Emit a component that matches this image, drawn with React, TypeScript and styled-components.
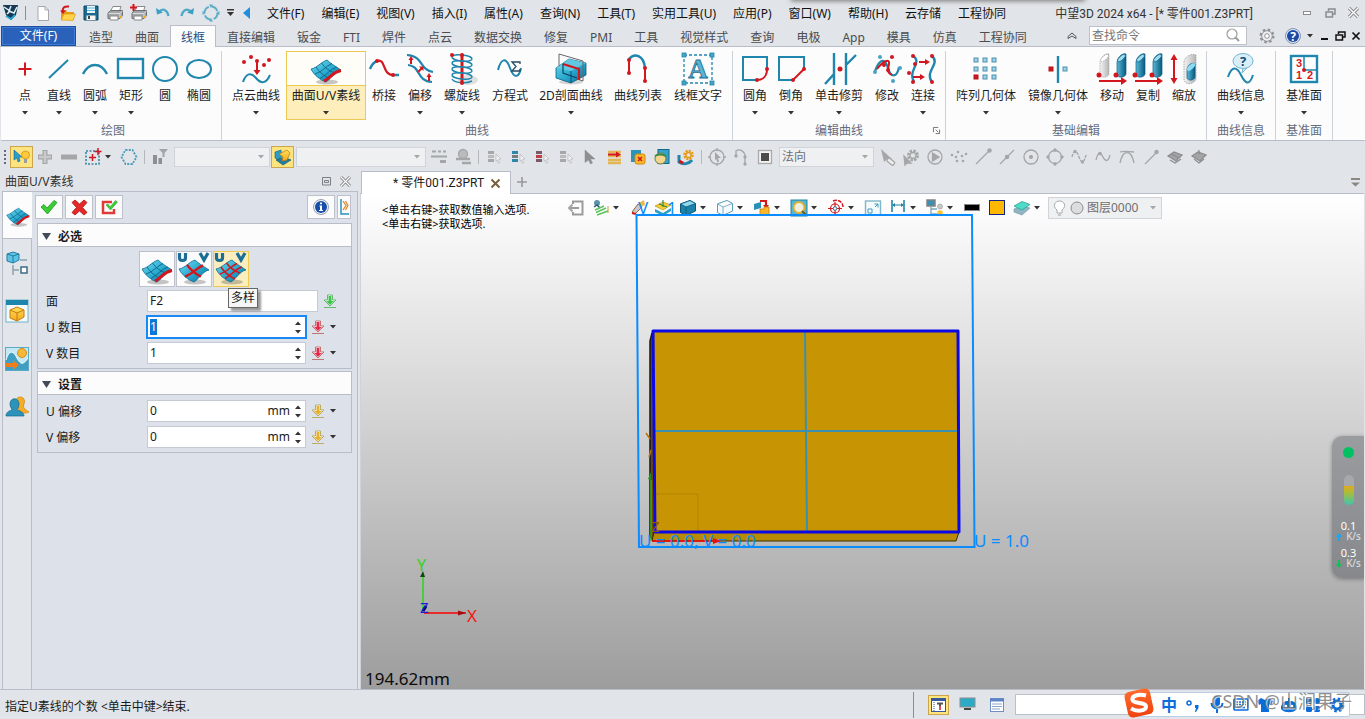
import React, { useEffect, useRef } from "react";
import styled, { createGlobalStyle, css } from "styled-components";

/* ---------- theme values ---------- */
const chrome = "#e1e5e9";
const line = "#b9bdca";
const teal = "#1f86ad";
const red = "#d3171f";
const grey = "#a4a6a8";

const GlobalStyle = createGlobalStyle`
  * { box-sizing: border-box; }
  html, body { margin: 0; height: 100%; overflow: hidden; }
  body, button, input, select {
    font-family: "Noto Sans", "Noto Sans CJK SC", sans-serif;
    font-size: 12px;
    line-height: 16px;
    color: #1a1a1a;
  }
  button, select, input { margin: 0; padding: 0; border: 0; background: none; border-radius: 0; }
  svg { display: block; flex: none; overflow: visible; }
  ::selection { background: #0a78d7; color: #fff; }
`;

/* ---------- shell ---------- */
const Shell = styled.div`
  position: relative;
  display: flex;
  flex-direction: column;
  height: 100vh;
  background: ${chrome};
  overflow: hidden;
  white-space: nowrap;
`;
const TopShadow = styled.div`
  position: absolute;
  top: -8px;
  left: 58%;
  width: 292px;
  height: 8px;
  box-shadow: 0 0 5px 1px #777;
`;
const Spacer = styled.div`
  flex: 1;
`;
const Gap = styled.span<{ $w: number }>`
  width: ${(p) => p.$w}px;
  flex: none;
`;
const Divider = styled.i<{ $h?: number; $c?: string }>`
  width: 1px;
  height: ${(p) => p.$h ?? 14}px;
  background: ${(p) => p.$c ?? "#b4b8bd"};
  margin: 0 3px;
  flex: none;
`;

const TitleBar = styled.header`
  display: flex;
  align-items: center;
  height: 25px;
  flex: none;
`;
const IconButton = styled.button<{ $w?: number; $h?: number }>`
  display: flex;
  align-items: center;
  justify-content: center;
  flex: none;
  width: ${(p) => p.$w ?? 24}px;
  height: ${(p) => p.$h ?? 22}px;
`;
const MenuBar = styled.nav`
  display: flex;
  gap: 17px;
  padding: 2px 0 0 12px;
`;
const MenuItem = styled.button`
  color: #111;
`;
const WindowTitle = styled.h1`
  margin: 0;
  padding: 2px 42px 0 0;
  font-family: Roboto, "Noto Sans CJK SC", sans-serif;
  font-size: 12px;
  font-weight: 400;
  color: #333;
`;

const TabRow = styled.div`
  display: flex;
  align-items: center;
  height: 22px;
  flex: none;
  border-bottom: 1px solid ${line};
`;
const FileTab = styled.button`
  width: 75px;
  height: 20px;
  margin: 0 2px 0 1px;
  background: #2a62bb;
  border: 1px solid #1b4f9f;
  box-shadow: inset 0 0 0 1px #3d7ad6;
  color: #fff;
`;
const RibbonTab = styled.button<{ $on?: boolean }>`
  height: 22px;
  padding: 4px 11px 0;
  color: #4a4c50;
  ${(p) =>
    p.$on &&
    css`
      align-self: flex-start;
      padding: 3px 10px 0;
      background: #fcfcfc;
      border: 1px solid ${line};
      border-bottom: 0;
      color: #2a4d7c;
    `}
`;
const SearchBox = styled.label`
  display: flex;
  align-items: center;
  width: 158px;
  height: 19px;
  margin: 0 8px 1px 0;
  padding: 0 6px 0 2px;
  background: #fff;
  border: 1px solid #bcc0c8;
`;
const SearchInput = styled.input`
  flex: 1;
  min-width: 0;
  padding-top: 1px;
  outline: 0;
  &::placeholder {
    color: #747678;
    opacity: 1;
  }
`;

/* ---------- ribbon ---------- */
const Ribbon = styled.section`
  display: flex;
  height: 94px;
  flex: none;
  margin-left: 1px;
  padding-top: 4px;
  background: #fcfcfc;
  border-bottom: 1px solid ${line};
`;
const Group = styled.div<{ $lead?: number }>`
  position: relative;
  display: flex;
  flex-direction: column;
  padding: 0 4px 0 ${(p) => p.$lead ?? 4}px;
  border-right: 1px solid #cdd1d8;
`;
const GroupTools = styled.div`
  display: flex;
  height: 69px;
`;
const GroupName = styled.div`
  margin-top: 3px;
  text-align: center;
  color: #666c7e;
`;
const Launcher = styled.button`
  position: absolute;
  right: 5px;
  bottom: 6px;
`;
const Tool = styled.button<{ $w: number; $hot?: boolean }>`
  display: flex;
  flex-direction: column;
  align-items: center;
  width: ${(p) => p.$w}px;
  height: 69px;
  padding-top: 2px;
  flex: none;
  ${(p) =>
    p.$hot &&
    css`
      padding-top: 1px;
      border: 1px solid #ecc952;
      background: linear-gradient(#fffdf8 0 33px, #ecc952 33px 34px, #fdeebb 34px);
    `}
`;
const ToolName = styled.span`
  display: block;
  height: 16px;
  margin: 3px -6px 7px;
  color: #1c1c1c;
`;

/* ---------- selection bar ---------- */
const SelectBar = styled.div`
  display: flex;
  align-items: center;
  height: 30px;
  flex: none;
  padding-top: 2px;
`;
const HotButton = styled(IconButton)`
  border: 1px solid #cda54a;
  background: #fde47e;
`;
const Combo = styled.div<{ $w: number; $h?: number }>`
  display: flex;
  align-items: center;
  width: ${(p) => p.$w}px;
  height: ${(p) => p.$h ?? 20}px;
  margin: 0 1px 1px 2px;
  padding: 0 5px 0 2px;
  flex: none;
  background: #eff0f1;
  border: 1px solid #d0d4d9;
  gap: 3px;
`;
const ComboSelect = styled.select`
  appearance: none;
  flex: 1;
  min-width: 0;
  padding-top: 1px;
  opacity: 1;
  color: #6d6f72;
`;

/* ---------- work area ---------- */
const Work = styled.div`
  display: flex;
  flex: 1;
  min-height: 0;
`;
const Dock = styled.aside`
  display: flex;
  flex-direction: column;
  width: 360px;
  flex: none;
  padding: 0 2px 0 2px;
`;
const DockTitle = styled.div`
  display: flex;
  align-items: center;
  gap: 9px;
  height: 20px;
  padding: 1px 7px 0 3px;
  color: #333;
`;
const DockBody = styled.div`
  display: flex;
  flex: 1;
  border: 1px solid ${line};
  border-bottom: 0;
`;
const SideTabs = styled.div`
  width: 29px;
  border-right: 1px solid ${line};
  background: #e2e6ea;
`;
const SideTab = styled.button<{ $on?: boolean }>`
  display: flex;
  align-items: center;
  justify-content: center;
  width: 28px;
  height: 48px;
  ${(p) =>
    p.$on &&
    css`
      width: 29px;
      height: 47px;
      background: #fcfcfc;
      border-bottom: 1px solid ${line};
    `}
`;
const Panel = styled.form`
  flex: 1;
  min-width: 0;
  padding: 3px;
  background: #dde1e9;
`;
const Actions = styled.div`
  display: flex;
  gap: 2px;
  margin-bottom: 4px;
`;
const ActionButton = styled.button<{ $w?: number }>`
  display: flex;
  align-items: center;
  justify-content: center;
  width: ${(p) => p.$w ?? 28}px;
  height: 24px;
  background: #fbfbfc;
  border: 1px solid #bdc1cc;
`;
const Section = styled.section`
  margin: 0 2px 2px;
  padding-bottom: 2px;
  border: 1px solid ${line};
`;
const SectionHead = styled.h2`
  display: flex;
  align-items: center;
  gap: 7px;
  height: 23px;
  margin: 0;
  padding: 3px 0 0 4px;
  background: #fcfcfc;
  border-bottom: 1px solid ${line};
  font-size: 12px;
  line-height: 16px;
  font-weight: 700;
`;
const Modes = styled.div`
  position: relative;
  display: flex;
  gap: 1px;
  padding: 4px 0 1px 101px;
`;
const Mode = styled.button<{ $on?: boolean }>`
  display: flex;
  align-items: center;
  justify-content: center;
  width: 36px;
  height: 36px;
  border: 1px solid ${(p) => (p.$on ? "#eecb4e" : "#bdc1cc")};
  background: ${(p) => (p.$on ? "#faedc0" : "#fcfcfc")};
`;
const Tip = styled.span`
  position: absolute;
  left: 190px;
  top: 41px;
  z-index: 2;
  padding: 1px 2px;
  background: #f6f6f6;
  border: 1px solid #666;
  box-shadow: 3px 3px 2px rgba(0, 0, 0, 0.4);
`;
const Rows = styled.div`
  ${Section}:last-of-type & {
    padding-top: 3px;
  }
`;
const Row = styled.div`
  display: flex;
  align-items: center;
  height: 26px;
  padding-left: 8px;
`;
const RowLabel = styled.label`
  width: 101px;
  padding-top: 2px;
`;
const Field = styled.div<{ $w: number; $on?: boolean }>`
  display: flex;
  align-items: center;
  width: ${(p) => p.$w}px;
  height: 22px;
  padding: 0 4px 0 2px;
  background: #fff;
  border: 1px solid #c6cad2;
  ${(p) =>
    p.$on &&
    css`
      border-color: #1788f4;
      box-shadow: 0 0 0 1px #1788f4;
    `}
`;
const FieldInput = styled.input`
  flex: 1;
  min-width: 0;
  outline: 0;
`;
const Unit = styled.span`
  margin-right: 5px;
`;
const Spin = styled.span`
  display: flex;
  flex-direction: column;
  gap: 5px;
`;
const RowTools = styled.span`
  display: flex;
  align-items: center;
  gap: 5px;
  padding-left: 5px;
`;

/* ---------- document area ---------- */
const Docs = styled.main`
  display: flex;
  flex-direction: column;
  flex: 1;
  min-width: 0;
  padding-right: 1px;
`;
const DocTabs = styled.div`
  display: flex;
  align-items: center;
  height: 23px;
  flex: none;
  padding: 0 4px 0 1px;
  border-bottom: 1px solid ${line};
`;
const DocTab = styled.div`
  display: flex;
  align-items: center;
  align-self: flex-start;
  gap: 7px;
  width: 150px;
  height: 23px;
  padding-left: 31px;
  background: #fff;
  border: 1px solid ${line};
  border-bottom: 0;
  font-family: Roboto, "Noto Sans CJK SC", sans-serif;
`;
const Viewport = styled.div`
  position: relative;
  flex: 1;
  min-height: 0;
  overflow: hidden;
  border-left: 1px solid #cfd2d6;
  background: linear-gradient(#ffffff, #d0d0d0 48%, #9d9d9d);
`;
const ViewTop = styled.div`
  display: flex;
`;
const Prompt = styled.p`
  width: 202px;
  margin: 0;
  padding: 9px 0 0 21px;
  flex: none;
  font-size: 11px;
  line-height: 14px;
  color: #000;
`;
const ViewTools = styled.div`
  display: flex;
  align-items: center;
  height: 22px;
  margin-top: 3px;
`;
const ViewTool = styled.button<{ $menu?: boolean }>`
  display: flex;
  align-items: center;
  gap: 3px;
  flex: none;
  width: ${(p) => (p.$menu ? 37 : 25)}px;
  height: 22px;
  padding-left: 4px;
`;
const Scene = styled.svg`
  position: absolute;
  inset: 0;
  width: 100%;
  height: 100%;
  pointer-events: none;
  font-family: "Noto Sans", sans-serif;
  font-size: 17px;
`;
const Monitor = styled.div`
  position: absolute;
  right: -1px;
  bottom: 111px;
  display: flex;
  flex-direction: column;
  align-items: center;
  width: 33px;
  height: 142px;
  padding-top: 11px;
  border-radius: 10px 0 0 10px;
  background: linear-gradient(#9b9c9f, #86888b);
  box-shadow: 0 1px 4px rgba(0, 0, 0, 0.35);
  color: #fff;
  font-size: 11px;
  line-height: 11px;
`;
const Lamp = styled.i`
  width: 11px;
  height: 11px;
  border-radius: 50%;
  background: #00c162;
`;
const Gauge = styled.i`
  width: 10px;
  height: 30px;
  margin: 17px 0 15px;
  border-radius: 5px;
  background: linear-gradient(#a6a8ab 35%, #e8a81c 35%, #a8bd3c 60%, #38c8b0);
`;
const Speed = styled.div`
  display: flex;
  flex-direction: column;
  align-items: center;
  height: 27px;
`;
const SpeedUnit = styled.small`
  display: flex;
  align-items: center;
  gap: 4px;
  font-size: 10px;
  color: #e3e3e3;
`;

/* ---------- status bar ---------- */
const StatusBar = styled.footer`
  position: relative;
  display: flex;
  align-items: center;
  height: 30px;
  flex: none;
  border-top: 1px solid ${line};
`;
const Message = styled.span`
  flex: 1;
  padding: 4px 0 0 5px;
`;
const StatusButton = styled(IconButton)<{ $on?: boolean }>`
  width: 21px;
  height: 20px;
  margin-right: 8px;
  ${(p) =>
    p.$on &&
    css`
      background: #fde47e;
      border: 1px solid #cda54a;
    `}
`;
const StatusInput = styled.input`
  width: 350px;
  height: 21px;
  background: #fff;
  border: 1px solid #bcc0c8;
`;
const ImeBar = styled.div`
  position: absolute;
  right: 15px;
  bottom: 2px;
  display: flex;
  align-items: center;
  width: 220px;
  height: 25px;
  padding-left: 26px;
  background: #fff;
  border: 1px solid #b9cfe8;
  border-radius: 2px;
`;
const ImeLogo = styled.svg`
  position: absolute;
  left: -8px;
  top: -6px;
`;
const ImeText = styled.span`
  width: 24px;
  text-align: center;
  font-size: 16px;
  line-height: 20px;
  font-weight: 700;
  color: #0a6ddb;
`;
const ImeCell = styled.span`
  display: flex;
  justify-content: center;
  width: 24px;
`;
const Watermark = styled.span`
  position: absolute;
  right: 13px;
  bottom: 6px;
  font-size: 18px;
  line-height: 24px;
  color: rgba(115, 115, 115, 0.8);
  text-shadow: 1px 1px 0 rgba(255, 255, 255, 0.7);
`;

/* ---------- drawing helpers ---------- */
type Kids = { children?: React.ReactNode };
const Big = ({ children }: Kids) => (
  <svg width="32" height="32" viewBox="0 0 32 32" fill="none" stroke={teal} strokeWidth="2">
    {children}
  </svg>
);
const Sm = ({ children }: Kids) => (
  <svg width="18" height="18" viewBox="0 0 18 18" fill="none">
    {children}
  </svg>
);
const Gray = ({ children }: Kids) => (
  <svg width="18" height="18" viewBox="0 0 18 18" fill="none" stroke={grey} strokeWidth="1.3">
    {children}
  </svg>
);
const Caret = ({ c = "#333" }: { c?: string }) => (
  <svg width="6" height="4" viewBox="0 0 6 4">
    <path d="M0 0h6L3 3.4z" fill={c} />
  </svg>
);
const UpCaret = () => (
  <svg width="6" height="4" viewBox="0 0 6 4">
    <path d="M0 4h6L3 .6z" fill="#333" />
  </svg>
);
const Dots = ({ at, r = 2 }: { at: number[][]; r?: number }) => (
  <g fill={red} stroke="none">
    {at.map(([x, y]) => (
      <circle key={`${x}-${y}`} cx={x} cy={y} r={r} />
    ))}
  </g>
);

const Defs = () => (
  <svg width="0" height="0" style={{ position: "absolute" }} aria-hidden="true">
    <defs>
      <linearGradient id="sheet" x1="0" y1="0" x2="1" y2="1">
        <stop offset="0" stopColor="#6fdcf2" />
        <stop offset=".55" stopColor="#27a6cc" />
        <stop offset="1" stopColor="#0b6c93" />
      </linearGradient>
      <linearGradient id="cyl">
        <stop offset="0" stopColor="#5bb9d8" />
        <stop offset="1" stopColor="#06587d" />
      </linearGradient>
      <linearGradient id="cylgrey">
        <stop offset="0" stopColor="#f4f4f4" />
        <stop offset="1" stopColor="#b5b5b5" />
      </linearGradient>
      <linearGradient id="gold" x1="0" y1="0" x2="0" y2="1">
        <stop offset="0" stopColor="#ffdf5a" />
        <stop offset="1" stopColor="#f5a81c" />
      </linearGradient>
      <linearGradient id="sogou" x1="0" y1="0" x2="0" y2="1">
        <stop offset="0" stopColor="#ff6a2b" />
        <stop offset="1" stopColor="#ef4310" />
      </linearGradient>
    </defs>
  </svg>
);

/* curved surface patch: a saddle-shaped quad with iso lines */
const sheetPath = "M1 16C7 15 11 9 17 7C20 10 25 13 31 17C25 18 22 25 16 29C10 27 4 22 1 16Z";
const Sheet = ({ kind = "edge", size = 32 }: { kind?: "edge" | "cross" | "grid"; size?: number }) => (
  <svg width={size} height={size} viewBox="0 0 32 32" fill="none">
    <ellipse cx="17" cy="29" rx="11" ry="2.500" fill="#00000038" />
    <path d={sheetPath} fill="url(#sheet)" stroke="#0b6a90" strokeWidth=".8" />
    {kind !== "cross" && (
      <g stroke={kind === "grid" ? red : "#0a6488"} strokeWidth={kind === "grid" ? 1.5 : 0.9}>
        <path d="M5 21C12 19 16 13 22 10.500M10 25.500C17 22 20 16 27 14" />
        <path d="M6 14C9 19 14 23 20 26M11.500 10C15 15 19 18 25 20" />
      </g>
    )}
    {kind === "edge" && <path d="M14 28C21 25 22 19 31 17.500" stroke={red} strokeWidth="3" />}
    {kind === "cross" && <path d="M7 23.500C15 21 18 15 25 12.500M9 12C13 17 17 21 23 23.500" stroke={red} strokeWidth="2.400" />}
    {kind !== "edge" && (
      <path d="M1.500 0V5Q1.500 7.500 4.500 7.500T7.500 5V0M22 0L26 7L30 0" stroke="#1b6f95" strokeWidth="3.200" />
    )}
  </svg>
);

const Cyl = ({ x, ghost }: { x: number; ghost?: boolean }) => (
  <g stroke={ghost ? "#9d9d9d" : "#0d5f84"} strokeWidth=".7" strokeDasharray={ghost ? "1.500 1" : undefined}>
    <path d={`M${x} 9C${x + 1} 3 ${x + 6} 0 ${x + 9} 1V21C${x + 8} 25 ${x + 1} 25 ${x} 22Z`} fill={ghost ? "url(#cylgrey)" : "url(#cyl)"} />
    <ellipse cx={x + 4.5} cy="5" rx="5" ry="2" transform={`rotate(-42 ${x + 4.5} 5)`} fill={ghost ? "#fff" : "#9fdcf0"} />
  </g>
);
const RedArrow = ({ d, head }: { d: string; head: string }) => (
  <g>
    <path d={d} stroke={red} strokeWidth="2" />
    <path d={head} fill={red} stroke="none" />
  </g>
);
const Square = ({ x, y, on }: { x: number; y: number; on?: boolean }) => (
  <rect x={x} y={y} width="4" height="4" fill={on ? red : "#9ed3ea"} stroke={on ? "#b5141b" : "#4d8fae"} strokeWidth="1" />
);

const icons: Record<string, React.ReactNode> = {
  point: <Big><path d="M16 9.500V22.500M9.500 16H22.500" stroke={red} /></Big>,
  lineSeg: <Big><path d="M6 25L25 7" /></Big>,
  arc: <Big><path d="M4 21C10 9 22 9 28 21" strokeWidth="2.4" /></Big>,
  rect: <Big><rect x="3" y="6" width="25" height="19" strokeWidth="2.400" /></Big>,
  circle: <Big><circle cx="16" cy="16" r="12" /></Big>,
  ellipse: <Big><ellipse cx="16" cy="16" rx="12" ry="9" /></Big>,
  cloud: (
    <Big>
      <path d="M3 29C6 20 11 19 16 25S26 31 30 22" />
      <RedArrow d="M17 8V19" head="M13.500 17h7L17 22z" />
      <Dots at={[[4, 9], [11, 4], [17, 8], [24, 12], [29, 7]]} />
    </Big>
  ),
  uv: <Sheet />,
  bridge: (
    <Big>
      <path d="M2 16C4 11 6 9 9 8M24 22H31" strokeWidth="2.400" />
      <path d="M9 8C18 5 14 22 25 22" stroke={red} strokeWidth="2.200" />
      <Dots at={[[9, 8], [25, 22]]} />
    </Big>
  ),
  offset: (
    <Big>
      <path d="M3 2C20 3 15 17 29 19M4 12C17 13 12 28 28 29" strokeWidth="2.200" />
      <g strokeWidth="1.500">
        <RedArrow d="M7 11V6" head="M4.500 7h5L7 3z" />
        <RedArrow d="M14 19L18 15" head="M15 13.500h4.500V18z" />
        <RedArrow d="M25 28V23" head="M22.500 24h5L25 20z" />
      </g>
    </Big>
  ),
  helix: (
    <Big>
      <ellipse cx="22" cy="27" rx="10" ry="5" fill="#0000001c" stroke="none" />
      <path d="M16 2V30" stroke={red} strokeWidth="3" />
      <g strokeWidth="1.400">
        {[5, 11, 17, 23].map((y) => (
          <ellipse key={y} cx="16" cy={y} rx="10" ry="3" transform={`rotate(6 16 ${y})`} />
        ))}
        <path d="M6 26C8 30 20 31 26 28" />
      </g>
      <Dots at={[[6, 2], [16, 2], [16, 30]]} />
    </Big>
  ),
  equation: (
    <Big>
      <path d="M4 17C7 5 12 4 16 15S25 25 27 15" />
      <path d="M26 11V9H18L22 13.500L18 18H26V16" stroke="#264a63" strokeWidth="1.300" />
    </Big>
  ),
  section2d: (
    <Big>
      <ellipse cx="16" cy="29" rx="12" ry="2.500" fill="#00000028" stroke="none" />
      <path d="M1 15L14 6L31 10V22L16 30L1 25Z" fill="url(#sheet)" stroke="#0b5f84" strokeWidth=".8" />
      <path d="M1 15L14 6L31 10L16 18Z" fill="#62c9e2" stroke="none" />
      <path d="M16 18V30" stroke="#075372" strokeWidth="1" />
      <path d="M4 13V1L28 8V28L22 26" stroke="#666" strokeWidth="1" />
      <path d="M8 11L24 16V27" stroke={red} strokeWidth="2.200" />
      <path d="M8 11V20L22 25" stroke="#0a4560" strokeWidth="1.200" />
    </Big>
  ),
  curveList: (
    <Big>
      <path d="M7 6C13-1 22 3 23 15" strokeWidth="2.400" />
      <path d="M7 6V20M23 15V28" stroke={red} strokeWidth="2" />
      <Dots at={[[7, 7], [7, 20], [23, 15], [23, 28]]} />
    </Big>
  ),
  wireText: (
    <Big>
      <rect x="2" y="2" width="28" height="28" strokeDasharray="3 2" strokeWidth="1.300" />
      {[[0, 0], [28, 0], [0, 28], [28, 28]].map(([x, y]) => (
        <rect key={`${x}${y}`} x={x} y={y} width="4" height="4" fill="#4aa3c5" stroke={teal} strokeWidth=".8" />
      ))}
      <text x="16" y="25" textAnchor="middle" fontFamily="Liberation Serif, serif" fontSize="27" fontWeight="700" fill="#5db4d2" stroke="#1c6f93" strokeWidth=".8">A</text>
    </Big>
  ),
  fillet: (
    <Big>
      <path d="M28 16V4H4V27H18" /><path d="M28 16C28 23 24 27 18 27" stroke={red} /><Dots at={[[28, 16], [18, 27]]} />
    </Big>
  ),
  chamfer: (
    <Big>
      <path d="M29 16V4H4V27H18" /><path d="M29 16L18 27" stroke={red} /><Dots at={[[29, 16], [18, 27]]} />
    </Big>
  ),
  trim: (
    <Big>
      <path d="M11 0V32M11 21L2 31M23 0V32M23 12L33 2" strokeWidth="2.400" /><Dots at={[[17, 16]]} r={2.500} />
    </Big>
  ),
  modify: (
    <Big>
      <path d="M4 18C9 5 14 5 17 15S26 25 28 14" strokeWidth="2.200" />
      <path d="M6 16C12 8 19 5 18 11S15 19 21 22" stroke={red} />
      <g fill="#4aa3c5" stroke="none"><circle cx="4" cy="19" r="2" /><circle cx="9" cy="4" r="2" /><circle cx="29" cy="15" r="2" /><circle cx="22" cy="28" r="2" /></g>
      <Dots at={[[21, 4], [13, 12], [17, 17]]} />
    </Big>
  ),
  connect: (
    <Big>
      <path d="M6 3C16 9 0 18 7 29M25 3C34 11 17 18 25 29" strokeWidth="2.400" />
      <RedArrow d="M12 9H19" head="M18 6L23 9L18 12z" />
      <RedArrow d="M6 24H14" head="M13 21L18 24L13 27z" />
      <Dots at={[[6, 3], [8, 11], [2, 20], [6, 29], [25, 3], [25, 29]]} />
    </Big>
  ),
  array: (
    <Big>
      {[5, 14, 23].map((x) => [5, 14, 22].map((y) => <Square key={`${x}${y}`} x={x - 1} y={y} on={x === 5 && y === 22} />))}
    </Big>
  ),
  mirror: <Big><path d="M16 3V30" strokeWidth="2.400" /><Square x={7} y={14} on /><Square x={21} y={14} /></Big>,
  move: <Big><Cyl x={4} ghost /><Cyl x={21} /><RedArrow d="M3 28H26" head="M25 24L31 28L25 32z" /><Dots at={[[3, 22], [20, 22]]} r={2.500} /></Big>,
  copy: <Big><Cyl x={4} /><Cyl x={21} /><RedArrow d="M3 28H26" head="M25 24L31 28L25 32z" /><Dots at={[[3, 22], [20, 22]]} r={2.500} /></Big>,
  scale: (
    <Big>
      <RedArrow d="M6 5V27" head="M2.500 7L6 1L9.500 7zM2.500 25L6 31L9.500 25z" />
      <path d="M16 9C17 3 24 0 28 2V26C26 32 17 32 16 27Z" fill="url(#cylgrey)" stroke="#999" strokeWidth=".8" strokeDasharray="1.500 1" />
      <path d="M19 16C20 11 25 9 27 11V24C26 28 20 28 19 25Z" fill="url(#cyl)" stroke="#0d5f84" strokeWidth=".7" />
      <ellipse cx="23" cy="14" rx="5" ry="2.200" transform="rotate(-42 23 14)" fill="#8fdcf2" stroke="none" />
    </Big>
  ),
  info: (
    <Big>
      <path d="M3 24C7 12 12 14 16 22S24 34 28 22" />
      <path d="M18 15L17 20L23 14" fill="#d8effa" stroke="#75b5d0" strokeWidth="1" />
      <ellipse cx="18" cy="8" rx="10" ry="7.500" fill="#d8effa" stroke="#75b5d0" strokeWidth="1" />
      <text x="18" y="13" textAnchor="middle" fontSize="13" fontWeight="700" fill="#164a70" stroke="none">?</text>
    </Big>
  ),
  datum: (
    <Big>
      <rect x="3" y="3" width="26" height="26" strokeWidth="2.400" fill="#fff" />
      <path d="M16 3V17H29" strokeWidth="1.500" />
      <g fontSize="11" fontWeight="700" fill={red} stroke="none" fontFamily="Liberation Sans, sans-serif">
        <text x="8" y="14">3</text><text x="8" y="26">1</text><text x="19" y="26">2</text>
      </g>
      <Dots at={[[16, 17]]} />
    </Big>
  ),
};

/* ---------- ribbon data ---------- */
type ToolDef = [string, string, number, boolean?, boolean?];
const groups: { name: string; lead?: number; launcher?: boolean; tools: ToolDef[] }[] = [
  { name: "绘图", lead: 8, tools: [["点", "point", 32, true], ["直线", "lineSeg", 36, true], ["圆弧", "arc", 36, true], ["矩形", "rect", 36, true], ["圆", "circle", 32], ["椭圆", "ellipse", 36]] },
  { name: "曲线", tools: [["点云曲线", "cloud", 60, true], ["曲面U/V素线", "uv", 80, true, true], ["桥接", "bridge", 36], ["偏移", "offset", 36, true], ["螺旋线", "helix", 48, true], ["方程式", "equation", 48], ["2D剖面曲线", "section2d", 74, true], ["曲线列表", "curveList", 60], ["线框文字", "wireText", 60]] },
  { name: "编辑曲线", launcher: true, tools: [["圆角", "fillet", 36, true], ["倒角", "chamfer", 36, true], ["单击修剪", "trim", 60, true], ["修改", "modify", 36], ["连接", "connect", 36, true]] },
  { name: "基础编辑", tools: [["阵列几何体", "array", 72, true], ["镜像几何体", "mirror", 72, true], ["移动", "move", 36], ["复制", "copy", 36], ["缩放", "scale", 36]] },
  { name: "曲线信息", tools: [["曲线信息", "info", 60, true]] },
  { name: "基准面", tools: [["基准面", "datum", 48, true]] },
];

const menus = ["文件(F)", "编辑(E)", "视图(V)", "插入(I)", "属性(A)", "查询(N)", "工具(T)", "实用工具(U)", "应用(P)", "窗口(W)", "帮助(H)", "云存储", "工程协同"];
const tabs = ["造型", "曲面", "线框", "直接编辑", "钣金", "FTI", "焊件", "点云", "数据交换", "修复", "PMI", "工具", "视觉样式", "查询", "电极", "App", "模具", "仿真", "工程协同"];

/* ---------- quick access icons ---------- */
const printer = (
  <g>
    <path d="M5 6L7 2.500H15L13.500 7" fill="#fff" stroke="#888" />
    <path d="M2 9L4.500 6.500H16.500V11.500L14 14.500H2Z" fill="#a3a6a8" stroke="#6d7073" />
    <path d="M2.500 9.500H14L16.500 7M14 9.500V14" stroke="#dcdedf" /><path d="M4 12H12V16H4Z" fill="#fff" stroke="#888" />
    <path d="M14 13h2" stroke="#f2a71d" strokeWidth="2" />
  </g>
);
const quick: [string, React.ReactNode][] = [
  ["新建", <Sm key="n"><path d="M4 2.500H11L14.500 6V16.500H4Z" fill="#fff" stroke="#a6a9ac" /><path d="M11 2.500V6H14.500" stroke="#a6a9ac" /></Sm>],
  ["打开", <Sm key="o"><path d="M3 6H8L9 8H16V16H3Z" fill="#e59b16" /><path d="M3 16L6 10H17.500L15 16.500Z" fill="#ffd34a" stroke="#e29a14" strokeWidth=".7" /><path d="M5 8C4 4 6 2 11 2.500" stroke={red} strokeWidth="2" /><path d="M2 6.500h6L5 10z" fill={red} /></Sm>],
  ["保存", <Sm key="s"><path d="M2 2H16V16H2Z" fill="#1c6a8f" stroke="#0c4562" /><path d="M5 2H13V9H5Z" fill="#eaf5fa" /><path d="M5 4h8M5 6.500h8" stroke="#56b8dc" /><path d="M4.500 11.500H13.500V16H4.500Z" fill="#f4f4f4" /><path d="M6 12h2v3H6z" fill="#444" /></Sm>],
  ["打印", <Sm key="p">{printer}</Sm>],
  ["批量打印", <Sm key="b">{printer}<path d="M3.500 0V7M0 3.500H7" stroke={red} strokeWidth="2" /></Sm>],
  ["撤销", <Sm key="u"><path d="M5 8C8 4 13 5 14.500 12" stroke="#4fa9c8" strokeWidth="2.400" /><path d="M2 4L3 10.500L9 8.500Z" fill="#3b9fc4" /></Sm>],
  ["重做", <Sm key="r"><path d="M13 8C10 4 5 5 3.500 12" stroke="#4fa9c8" strokeWidth="2.400" /><path d="M16 4L15 10.500L9 8.500Z" fill="#3b9fc4" /></Sm>],
  ["刷新", <Sm key="c"><circle cx="9" cy="9" r="6.500" stroke="#5fadc9" strokeWidth="2" strokeDasharray="7.200 3" /><path d="M7 0.500h4L9 4zM7 17.500h4L9 14zM.5 7v4L4 9zM17.500 7v4L14 9z" fill="#5fadc9" /></Sm>],
];

/* ---------- selection bar icons ---------- */
const bars = (a: string, b: string) => (
  <Gray>
    <g stroke="none"><rect x="3" y="3" width="6" height="3" fill={a} /><rect x="3" y="7" width="6" height="3" fill={b} /><rect x="3" y="11" width="6" height="3" fill={a} /></g>
    <path d="M11 6L16 11L13.500 11.500L14.500 15L13 15L12 12L11 13Z" fill="#f0f1f2" stroke="#b9bbbd" strokeWidth=".8" />
  </Gray>
);
const cursorPath = "M4 2L14 11H9.500L11.500 15L9.500 16L7.500 12L4 14.500Z";
const midIcons: React.ReactNode[] = [
  bars("#a5a7a9", "#bbb"), bars("#2c87a9", "#7a7c7e"), bars("#7a5a68", "#c23b46"), bars("#a5a7a9", "#bbb"),
  <Gray><path d={cursorPath} fill="#8d8f91" stroke="#8d8f91" strokeWidth=".5" /></Gray>,
  <Sm><path d="M3 4H16M3 8H16M3 12H16M3 15H16" stroke="#e3b553" strokeWidth="2.400" /><path d="M3 6.500H12" stroke={red} strokeWidth="2" /><path d="M11 3.500L16 6.500L11 9.500z" fill={red} /></Sm>,
  <Sm><rect x="2" y="2" width="10" height="12" fill="#2a94bb" /><rect x="6" y="6" width="10" height="10" rx="2" fill="#fbb92c" stroke="#d6850e" /><path d="M9 9L13 13M13 9L9 13" stroke={red} strokeWidth="1.600" /></Sm>,
  <Sm><rect x="5" y="1.500" width="11" height="14" fill="#33a3c9" stroke="#10678a" /><circle cx="7.500" cy="10.500" r="5.500" fill="#f3d58f" stroke="#5d7b42" /><path d="M2 8C5 6 9 6 13 8" stroke="#3a8a4a" strokeWidth="2" /></Sm>,
  <Sm><path d="M2 7V14C6 17 12 16 15 12" stroke="#2086ad" strokeWidth="3" /><path d="M2 13L6 15" stroke={red} strokeWidth="3" /><circle cx="11.500" cy="7" r="4" stroke="#e89a1b" strokeWidth="2.600" strokeDasharray="2 1.100" /><circle cx="11.500" cy="7" r="2.600" stroke="#e89a1b" strokeWidth="1.500" /></Sm>,
];
const rightIcons: React.ReactNode[] = [
  <Gray><path d="M3 1L14 11H9L6 14Z" fill={grey} stroke="none" /><rect x="9" y="11" width="8" height="4" rx="1" transform="rotate(40 12 13)" fill="#eee" /></Gray>,
  <Gray><circle cx="11" cy="7.500" r="4.500" strokeWidth="3" strokeDasharray="2.300 1.200" /><circle cx="11" cy="7.500" r="3" fill="#e1e5e9" /><path d="M2 8L9 15H5L3 17Z" fill={grey} /></Gray>,
  <Gray><circle cx="9" cy="9" r="7" /><path d="M6.500 5L13 9L6.500 13z" fill={grey} /></Gray>,
  <Gray><g fill={grey} stroke="none">{[[2, 7], [6, 9], [8, 4], [12, 8], [16, 6], [7, 13], [13, 13]].map(([x, y]) => <circle key={x} cx={x} cy={y} r="1.300" />)}</g></Gray>,
  <Gray><path d="M2 16L16 2" /><circle cx="15.500" cy="2.500" r="1.600" fill={grey} /></Gray>,
  <Gray><path d="M2 16L16 2" /><circle cx="9" cy="9" r="1.600" fill={grey} /></Gray>,
  <Gray><circle cx="9" cy="9" r="7" /><circle cx="9" cy="9" r="1.400" fill={grey} /></Gray>,
  <Gray><circle cx="9" cy="9" r="6.500" /><g fill={grey}><circle cx="9" cy="2" r="1" /><circle cx="9" cy="16" r="1" /><circle cx="2" cy="9" r="1" /><circle cx="16" cy="9" r="1" /></g></Gray>,
  <Gray><path d="M2 9C4 1 7 3 9 9S14 16 16 7" strokeDasharray="3 1" /><circle cx="5" cy="3.500" r="1" /><circle cx="12.500" cy="14" r="1" /></Gray>,
  <Gray><path d="M2 12C4 3 7 5 9 9S14 15 16 7" /><circle cx="6" cy="5.500" r="1.200" fill={grey} /></Gray>,
  <Gray><path d="M2 4C5 3 8 3 16 4M2 15C5 1 13 1 16 15" /></Gray>,
  <Gray><path d="M3 16L15 4" /><circle cx="14.500" cy="4" r="1.600" fill={grey} /></Gray>,
  <Gray><path d="M2 8L8 4L16 7L10 13Z" fill="#a2a4a6" stroke="#8b8d8f" /><path d="M4 12L9 15L15 11M5 6L13 10" stroke="#8b8d8f" /></Gray>,
  <Gray><path d="M2 8L8 4L16 7L10 13Z" fill="#a2a4a6" stroke="#8b8d8f" /><path d="M9 2V6M4 11L9 15L14 11" stroke="#8b8d8f" /></Gray>,
];

/* ---------- view toolbar ---------- */
const cube = (fill: string, stroke: string, lid: string) => (
  <Sm>
    <path d="M1.500 5L11 1.500L16.500 4.500V12L7 16.500L1.500 13.500Z" fill={fill} stroke={stroke} />
    <path d="M1.500 5L11 1.500L16.500 4.500L7 8Z" fill={lid} stroke={stroke} strokeWidth=".8" /><path d="M7 8V16.500" stroke={stroke} strokeWidth=".8" />
  </Sm>
);
const viewTools: [string, React.ReactNode, boolean?][] = [
  ["退出", <Gray><path d="M6 5V2.500H15.500V15.500H6V13M2 9H12" strokeWidth="2" stroke="#999b9d" /><path d="M5.500 5.500L2 9L5.500 12.500" strokeWidth="2" /></Gray>],
  ["拾取", <Sm><circle cx="5" cy="4" r="3" fill="#5b93ae" /><path d="M2 8L5 6L8 9" stroke="#2b5d77" strokeWidth="1.500" /><path d="M3 11L12 7M4 13.500L14 9M5 16L16 12" stroke="#5cc459" strokeWidth="1.500" /><path d="M16 7V14" stroke="#d09a3a" /></Sm>, true],
  ["外观", <Sm><path d="M3 13L9 5L13 8L6 15Z" fill="#c9c9c9" stroke="#8b6b4a" /><path d="M10 4L15 1L16 6L12 8Z" fill="#efb74d" /><path d="M3 14l4 1" stroke={red} strokeWidth="2" /></Sm>],
  ["基准", <Sm><path d="M1 10L9 14L17 9V12L9 17L1 13Z" fill="#2e9fc6" /><path d="M1 7L9 3L17 6L9 11Z" fill="#f6cf2e" stroke="#b6921a" strokeWidth=".7" /><path d="M9 1V8M5 5L13 8" stroke="#1f7f46" /></Sm>],
  ["着色", cube("#1d83ab", "#0d5878", "#8fd8ee"), true],
  ["线框", cube("#f5fafc", "#5d9dbb", "#ffffff"), true],
  ["剖切", <Sm><path d="M1 5L8 3V9L1 11Z" fill="#2a8fb5" /><path d="M7 2H13V7" stroke={red} strokeWidth="2.200" /><path d="M10 6h6l-3 4z" fill={red} /><path d="M7 10H11V8H16V16H7Z" fill="#f9b72b" stroke="#c77f0f" strokeWidth=".8" /></Sm>, true],
  ["缩放", <Sm><rect x="1" y="1" width="16" height="16" fill="#55b7d6" stroke="#2384a6" /><circle cx="9" cy="8.500" r="5.500" fill="#f3efdc" stroke="#d8b13a" strokeWidth="2" /><path d="M12 12L16 16" stroke="#7a5a16" strokeWidth="2" /></Sm>, true],
  ["定位", <Sm><circle cx="8" cy="9.500" r="4.500" stroke={red} strokeWidth="1.200" /><path d="M8 3V16M1 9.500H15" stroke={red} strokeWidth="1.200" /><path d="M6 2C11 0 16 3 16 8" stroke={red} strokeWidth="1.500" strokeDasharray="4 1" /><circle cx="8" cy="9.500" r="1.800" fill="#fff" stroke="#3c6c88" /></Sm>, true],
  ["全屏", <Sm><rect x="1.500" y="2" width="15" height="14" fill="#f4fbfd" stroke="#82b6c9" strokeWidth="1.400" /><path d="M4 10H8V14H4Z" fill="#fff" stroke="#3e97b7" /><path d="M10.500 5H14V8.500M14 5L11 8" stroke="#3e97b7" /></Sm>],
  ["测量", <Sm><path d="M3 1V13M15 1V13" stroke="#2384a6" strokeWidth="1.600" /><path d="M4 6H14" stroke="#2384a6" /><path d="M3 6l3-2v4zM15 6l-3-2v4z" fill="#2384a6" /><path d="M2 16H16" stroke={red} strokeWidth="2" /></Sm>, true],
  ["显示", <Sm><rect x="1" y="1" width="8" height="6" fill="#3b8fb2" stroke="#808284" strokeWidth="1.500" /><path d="M5 8V15H11M5 10H11" stroke="#7fa6b8" strokeWidth="1.300" /><circle cx="14" cy="7.500" r="2.500" fill="#c8c8c8" stroke="#999" strokeWidth=".6" /><circle cx="14" cy="14" r="2.800" fill="#f8c52c" /></Sm>, true],
  ["线宽", <Sm><rect x="1.500" y="5.500" width="15" height="6" fill="#000" stroke="#888" /></Sm>],
  ["颜色", <Sm><rect x="1.500" y="1.500" width="15" height="14" fill="#ffb800" stroke="#10258a" /></Sm>],
  ["图层", <Sm><path d="M1 10L9 7L17 9L9 16L1 13Z" fill="#8fb6c2" stroke="#6f8f9a" strokeWidth=".6" /><path d="M1 7L9 2.500L17 5.500L9 11Z" fill="#4fdcc6" stroke="#2ea191" strokeWidth=".8" /></Sm>, true],
];

const Pin = ({ c, edge }: { c: string; edge: string }) => (
  <svg width="14" height="15" viewBox="0 0 14 15">
    <path d="M4.500 1H9.500V6H13L7 12L1 6H4.500Z" fill="#fff" stroke={edge} />
    <path d="M5.500 2H8.500V7H11L7 11L3 7H5.500Z" fill={c} />
    <path d="M1 13.500H13" stroke={edge} />
  </svg>
);

const SpinField = ({ id, value, unit, active }: { id: string; value: string; unit?: string; active?: boolean }) => {
  const ref = useRef<HTMLInputElement>(null);
  useEffect(() => {
    if (active) ref.current?.select();
  }, [active]);
  return (
    <Field $w={159} $on={active}>
      <FieldInput id={id} ref={ref} defaultValue={value} />
      {unit && <Unit>{unit}</Unit>}
      <Spin>
        <button type="button" aria-label="增加"><UpCaret /></button>
        <button type="button" aria-label="减少"><Caret /></button>
      </Spin>
    </Field>
  );
};

const sideTabs: [string, React.ReactNode][] = [
  ["历史", <svg width="24" height="26" viewBox="0 0 24 26" fill="none"><path d="M2 4L8 2L14 4V10L8 13L2 11Z" fill="#5cc3e4" stroke="#257fa3" /><path d="M2 4L8 6L14 4M8 6V13" stroke="#257fa3" /><path d="M8 15V25M8 20H14M15 10H22" stroke="#8fa3ae" strokeWidth="1.500" /><rect x="16" y="17" width="6" height="6" fill="#fff" stroke="#3d6c86" strokeWidth="1.500" /></svg>],
  ["装配", <svg width="24" height="24" viewBox="0 0 24 24" fill="none"><rect x="1" y="1" width="22" height="22" fill="#f4fafc" stroke="#6fb2cc" /><rect x="1" y="1" width="22" height="5" fill="#1d84ab" /><path d="M5 11L12 8L19 11V18L12 22L5 19Z" fill="url(#gold)" stroke="#c57d0c" /><path d="M5 11L12 14L19 11M12 14V22" stroke="#c57d0c" /></svg>],
  ["视觉", <svg width="24" height="24" viewBox="0 0 24 24" fill="none"><rect x=".5" y=".5" width="23" height="23" fill="#c3e8f4" stroke="#5aa9c5" /><path d="M1 13C4 3 8 3 12 11S19 17 23 11V23H1Z" fill="#3f9fc2" /><path d="M1 13C4 3 8 3 12 11S19 17 23 11" stroke="#fff" /><circle cx="17" cy="6" r="4.500" fill="#f8b93a" stroke="#d98c14" /><path d="M0 16H8V13L14 18L8 23V20H0Z" fill="#ef7d1d" /></svg>],
  ["用户", <svg width="24" height="22" viewBox="0 0 24 22"><path d="M12 2C17-1 21 3 19 8C18 11 18 12 24 16C20 18 16 17 14 15Z" fill="#f5ad28" stroke="#cf8410" strokeWidth=".7" /><path d="M5 8C5 1 14 1 14 8C14 11 12 13 12 14C16 15 19 17 19 20H1C1 17 3 15 7 14C7 13 5 11 5 8Z" fill="#2c93ba" stroke="#14678a" strokeWidth=".7" /></svg>],
];

const RestoreIcon = ({ c }: { c: string }) => (
  <svg width="11" height="10" viewBox="0 0 11 10" fill="none" stroke={c} strokeWidth="1.500">
    <path d="M3.500 3V1H10V6H8M1 4H7.500V9H1Z" />
  </svg>
);

export default function App() {
  return (
    <Shell>
      <GlobalStyle />
      <Defs />
      <TitleBar>
        <IconButton $w={22} aria-label="中望3D">
          <svg width="16" height="18" viewBox="0 0 16 18" fill="none">
            <path d="M0 1H15L13 11L8 16L3 11Z" fill="#173a52" /><path d="M1 3L7 7L4 10M8 2L6 7L11 9L14 3" stroke="#dff3fb" strokeWidth="1.500" /><path d="M3 12L8 15L12 11" stroke="#2aa2cf" strokeWidth="1.800" />
          </svg>
        </IconButton>
        <Divider $h={14} $c="#8b8f94" />
        <Gap $w={2} />
        {quick.map(([name, icon]) => (
          <IconButton key={name} aria-label={name}>{icon}</IconButton>
        ))}
        <IconButton $w={14} aria-label="更多">
          <svg width="7" height="7" viewBox="0 0 7 7"><path d="M0 0h7v1.500H0zM0 3h7L3.500 7z" fill="#333" /></svg>
        </IconButton>
        <IconButton $w={18} aria-label="返回">
          <svg width="7" height="12" viewBox="0 0 7 12"><path d="M7 0V12L0 6z" fill="#1f8ee0" /></svg>
        </IconButton>
        <MenuBar>
          {menus.map((m) => (
            <MenuItem key={m}>{m}</MenuItem>
          ))}
        </MenuBar>
        <Spacer />
        <WindowTitle>中望3D 2024 x64 - [* 零件001.Z3PRT]</WindowTitle>
        <IconButton aria-label="最小化">
          <svg width="8" height="4" viewBox="0 0 8 4"><rect x=".5" y=".5" width="7" height="3" fill="#fff" stroke="#8b8d90" /></svg>
        </IconButton>
        <IconButton $w={22} aria-label="还原"><RestoreIcon c="#8b8d90" /></IconButton>
        <IconButton $w={24} aria-label="关闭">
          <svg width="11" height="11" viewBox="0 0 11 11" fill="none"><path d="M1 1L10 10M10 1L1 10" stroke="#8b8d90" strokeWidth="3.200" /><path d="M1 1L10 10M10 1L1 10" stroke="#fff" strokeWidth="1.300" /></svg>
        </IconButton>
      </TitleBar>

      <TabRow>
        <FileTab>文件(F)</FileTab>
        {tabs.map((t) => (
          <RibbonTab key={t} $on={t === "线框"}>{t}</RibbonTab>
        ))}
        <Spacer />
        <IconButton $w={34} aria-label="折叠功能区">
          <svg width="10" height="8" viewBox="0 0 10 8" fill="none" stroke="#555"><path d="M1 4.500L5 1L9 4.500V6.500L5 4L1 6.500Z" /></svg>
        </IconButton>
        <SearchBox>
          <SearchInput placeholder="查找命令" aria-label="查找命令" />
          <svg width="14" height="14" viewBox="0 0 14 14" fill="none" stroke="#999b9e" strokeWidth="1.200"><circle cx="6" cy="6" r="5" /><path d="M9.500 9.500L13 13" strokeWidth="2" /></svg>
        </SearchBox>
        <IconButton aria-label="设置">
          <svg width="16" height="16" viewBox="0 0 16 16" fill="none" stroke="#909295"><circle cx="8" cy="8" r="6.300" strokeWidth="2.400" strokeDasharray="2.500 2.440" /><circle cx="8" cy="8" r="5.300" fill="#eceef0" /><circle cx="8" cy="8" r="2.300" fill="#fff" /></svg>
        </IconButton>
        <IconButton $w={28} aria-label="帮助">
          <svg width="16" height="16" viewBox="0 0 16 16"><circle cx="8" cy="8" r="7.500" fill="#dfe5f2" stroke="#8896b5" /><circle cx="8" cy="8" r="6" fill="#1c4aa8" /><text x="8" y="12.500" textAnchor="middle" fontSize="12" fontWeight="700" fill="#fff">?</text></svg>
        </IconButton>
        <Caret />
        <IconButton $w={22} aria-label="最小化文档">
          <svg width="7" height="11" viewBox="0 0 7 11"><path d="M0 8h7v2H0z" fill="#111" /></svg>
        </IconButton>
        <IconButton $w={11} aria-label="还原文档"><RestoreIcon c="#111" /></IconButton>
        <IconButton $w={19} aria-label="关闭文档">
          <svg width="8" height="8" viewBox="0 0 8 8"><path d="M.5 .5L7.500 7.500M7.500 .5L.5 7.500" stroke="#111" strokeWidth="1.700" /></svg>
        </IconButton>
      </TabRow>

      <Ribbon>
        {groups.map((g) => (
          <Group key={g.name} $lead={g.lead}>
            <GroupTools>
              {g.tools.map(([name, icon, w, menu, hot]) => (
                <Tool key={name} $w={w} $hot={hot}>
                  {icons[icon]}
                  <ToolName>{name}</ToolName>
                  {menu && <Caret />}
                </Tool>
              ))}
            </GroupTools>
            <GroupName>{g.name}</GroupName>
            {g.launcher && (
              <Launcher aria-label="更多选项">
                <svg width="7" height="7" viewBox="0 0 8 8" fill="none" stroke="#666"><path d="M.5 6V.5H6M3 3L6 6M7.500 3V7.500H3" /></svg>
              </Launcher>
            )}
          </Group>
        ))}
      </Ribbon>

      <SelectBar>
        <svg width="10" height="16" viewBox="0 0 10 16"><path d="M5 1V16" stroke="#666a80" strokeWidth="2" strokeDasharray="2 2" /></svg>
        <HotButton $w={23} aria-label="选择">
          <Sm><path d="M1 2L9 9H6L7 13L5 14L4 10L1 12Z" fill="#2b9ccb" stroke="#14678d" strokeWidth=".6" /><circle cx="12.500" cy="7" r="4" fill="#ffc93a" stroke="#cf8a14" strokeWidth=".7" /><path d="M11 11h3v4h-3z" fill="#9a9c9e" /></Sm>
        </HotButton>
        <IconButton aria-label="添加"><Gray><path d="M9 2V16M2 9H16" strokeWidth="5" /><path d="M9 3V15M3 9H15" stroke="#c7c9cb" strokeWidth="2.500" /></Gray></IconButton>
        <IconButton aria-label="移除"><Gray><path d="M1 9H17" strokeWidth="5" /></Gray></IconButton>
        <IconButton aria-label="框选">
          <Sm><rect x="2" y="3" width="13" height="13" stroke="#3486a8" strokeWidth="1.600" strokeDasharray="2 1.500" /><path d="M8.500 6V13M5 9.500H12" stroke={red} strokeWidth="1.500" /><path d="M14 0V7M10.500 3.500H17.500" stroke={red} strokeWidth="1.500" /></Sm>
        </IconButton>
        <Caret />
        <Gap $w={6} />
        <IconButton aria-label="多边形选择">
          <Sm><path d="M5.500 2H12.500L16.500 9L12.500 16H5.500L1.500 9Z" stroke="#4a9cba" strokeWidth="1.800" strokeDasharray="2 1.300" /></Sm>
        </IconButton>
        <Divider />
        <IconButton aria-label="过滤器"><Gray><path d="M2 7H6V16H2ZM7.500 10H11V16H7.500Z" fill="#8d8f91" stroke="none" /><path d="M8 1H17L13.500 5V9H11.500V5Z" fill="#a2a4a6" stroke="none" /></Gray></IconButton>
        <Combo $w={96}><ComboSelect disabled aria-label="过滤器列表" /><Caret c={grey} /></Combo>
        <HotButton $w={23} aria-label="属性过滤">
          <Sm><path d="M1 4L7 2L8 8L4 12L1 10Z" fill="#2c9ac1" stroke="#14678d" strokeWidth=".6" /><path d="M2 12L9 17L17 12L10 9Z" fill="#1f7ea4" stroke="#0e516d" strokeWidth=".6" /><path d="M5 6L13 2L16 5L13 12L8 13L9 9Z" fill="url(#gold)" stroke="#b3790f" strokeWidth=".7" /></Sm>
        </HotButton>
        <Combo $w={130}><ComboSelect disabled aria-label="对象类型" /><Caret c={grey} /></Combo>
        <IconButton aria-label="链接"><Gray><path d="M2 3.500H6M8 3.500H11M13 3.500H16M1 8.500H17" strokeWidth="2" /><path d="M10 13.500H16" strokeWidth="3" /></Gray></IconButton>
        <IconButton aria-label="全局"><Gray><circle cx="9" cy="6" r="4.500" fill="#b9bbbd" /><path d="M2 11H16M8 15H17" strokeWidth="2.500" /></Gray></IconButton>
        <Divider />
        {midIcons.map((icon, i) => (
          <IconButton key={i} aria-label={`选择方式 ${i + 1}`}>{icon}</IconButton>
        ))}
        <Divider />
        <IconButton aria-label="捕捉"><Gray><circle cx="9" cy="9" r="7" /><path d="M7 4L13 10H10L11 14L9 14L8.500 11L7 12Z" fill={grey} stroke="none" /><path d="M9 0V3M9 15V18M0 9H3M15 9H18" /></Gray></IconButton>
        <IconButton aria-label="曲线链"><Gray><path d="M4 8V3C8 0 13 4 13 8V16" /><g fill={grey}><circle cx="4" cy="8" r="1" /><circle cx="13" cy="9" r="1" /><circle cx="13" cy="16" r="1" /></g></Gray></IconButton>
        <IconButton aria-label="边界"><Gray><rect x="2.500" y="2.500" width="13" height="13" fill="#f2f2f2" stroke="#aaa" /><rect x="5" y="5" width="8" height="8" fill="#4b4b4b" stroke="none" /></Gray></IconButton>
        <Combo $w={95}>
          <ComboSelect disabled aria-label="方向" defaultValue="n"><option value="n">法向</option></ComboSelect>
          <Caret c={grey} />
        </Combo>
        {rightIcons.map((icon, i) => (
          <IconButton key={i} aria-label={`捕捉方式 ${i + 1}`}>{icon}</IconButton>
        ))}
      </SelectBar>

      <Work>
        <Dock>
          <DockTitle>
            曲面U/V素线
            <Spacer />
            <svg width="9" height="9" viewBox="0 0 9 9" fill="none" stroke="#7c7f84"><path d="M.5 .5H8.500V8H.5Z" /><path d="M2.500 3.500H6.500V5.500H2.500Z" /></svg>
            <svg width="11" height="11" viewBox="0 0 11 11" fill="none"><path d="M1 1L10 10M10 1L1 10" stroke="#7c7f84" strokeWidth="3" /><path d="M1 1L10 10M10 1L1 10" stroke="#fff" strokeWidth="1.200" /></svg>
          </DockTitle>
          <DockBody>
            <SideTabs>
              <SideTab $on aria-label="命令"><Sheet size={24} /></SideTab>
              {sideTabs.map(([name, icon]) => (
                <SideTab key={name} aria-label={name}>{icon}</SideTab>
              ))}
            </SideTabs>
            <Panel onSubmit={(e) => e.preventDefault()}>
              <Actions>
                <ActionButton aria-label="确定"><svg width="18" height="16" viewBox="0 0 18 16"><path d="M1 8L4 5.500L7 9L14 1.500L17 3.500L7.500 15Z" fill="#3ccc33" stroke="#1e9a1c" strokeWidth=".8" /></svg></ActionButton>
                <ActionButton aria-label="取消"><svg width="17" height="17" viewBox="0 0 17 17"><path d="M4 1L8.500 5L13 1L16 3.500L11.500 8.500L16 13.500L13 16L8.500 12L4 16L1 13.500L5.500 8.500L1 3.500Z" fill="#e32a2a" stroke="#a81515" strokeWidth=".8" /></svg></ActionButton>
                <ActionButton aria-label="应用"><svg width="17" height="16" viewBox="0 0 17 16" fill="none"><path d="M11 3H2V14H13V10" stroke="#dd3a38" strokeWidth="2.500" /><path d="M5 6L7 5L9 8L14.500 1.500L16.500 3L9.500 11Z" fill="#3ccc33" stroke="#1e9a1c" strokeWidth=".5" /></svg></ActionButton>
                <Spacer />
                <ActionButton aria-label="信息"><svg width="16" height="16" viewBox="0 0 16 16"><circle cx="8" cy="8" r="7.500" fill="#eef1f7" stroke="#98a0b2" /><circle cx="8" cy="8" r="6" fill="#174ea8" /><path d="M6.500 6.500H9V11H10V12H6V11H7V7.500H6.500ZM7 3.500H9V5.300H7Z" fill="#fff" /></svg></ActionButton>
                <ActionButton $w={14} aria-label="展开"><svg width="9" height="16" viewBox="0 0 9 16" fill="none"><path d="M1 0V15H9" stroke="#2a93b8" strokeWidth="1.500" /><path d="M3 2L6 6.500L3 11M5.500 2L8 6.500L5.500 11" stroke="#e28a2a" strokeWidth="1.300" /></svg></ActionButton>
                <Gap $w={1} />
              </Actions>
              <Section>
                <SectionHead><svg width="9" height="7" viewBox="0 0 9 7"><path d="M0 0h9L4.500 7z" fill="#444b58" /></svg>必选</SectionHead>
                <Modes>
                  <Mode type="button" aria-label="单边"><Sheet /></Mode>
                  <Mode type="button" aria-label="单个"><Sheet kind="cross" /></Mode>
                  <Mode type="button" $on aria-label="多样"><Sheet kind="grid" /></Mode>
                  <Tip role="tooltip">多样</Tip>
                </Modes>
                <Rows>
                  <Row>
                    <RowLabel htmlFor="face">面</RowLabel>
                    <Field $w={171}><FieldInput id="face" defaultValue="F2" /></Field>
                    <RowTools><Pin c="#3cc44c" edge="#66b873" /></RowTools>
                  </Row>
                  <Row>
                    <RowLabel htmlFor="ucount">U 数目</RowLabel>
                    <SpinField id="ucount" value="1" active />
                    <RowTools><Pin c="#e32b52" edge="#c0736f" /><Caret /></RowTools>
                  </Row>
                  <Row>
                    <RowLabel htmlFor="vcount">V 数目</RowLabel>
                    <SpinField id="vcount" value="1" />
                    <RowTools><Pin c="#e32b52" edge="#c0736f" /><Caret /></RowTools>
                  </Row>
                </Rows>
              </Section>
              <Section>
                <SectionHead><svg width="9" height="7" viewBox="0 0 9 7"><path d="M0 0h9L4.500 7z" fill="#444b58" /></svg>设置</SectionHead>
                <Rows>
                  <Row>
                    <RowLabel htmlFor="uoff">U 偏移</RowLabel>
                    <SpinField id="uoff" value="0" unit="mm" />
                    <RowTools><Pin c="#e8b02c" edge="#b9ac63" /><Caret /></RowTools>
                  </Row>
                  <Row>
                    <RowLabel htmlFor="voff">V 偏移</RowLabel>
                    <SpinField id="voff" value="0" unit="mm" />
                    <RowTools><Pin c="#e8b02c" edge="#b9ac63" /><Caret /></RowTools>
                  </Row>
                </Rows>
              </Section>
            </Panel>
          </DockBody>
        </Dock>

        <Docs>
          <DocTabs>
            <DocTab>
              * 零件001.Z3PRT
              <svg width="9" height="9" viewBox="0 0 9 9"><path d="M.5 .5L8.500 8.500M8.500 .5L.5 8.500" stroke="#77603a" strokeWidth="2" /></svg>
            </DocTab>
            <IconButton $w={22} aria-label="新建文档"><svg width="10" height="10" viewBox="0 0 10 10"><path d="M5 0V10M0 5H10" stroke="#96989b" strokeWidth="1.600" /></svg></IconButton>
            <Spacer />
            <IconButton $w={10} aria-label="文档列表"><svg width="9" height="9" viewBox="0 0 9 9"><path d="M0 0h9v2H0zM0 4.500h9L4.500 8.500z" fill="#8c8783" /></svg></IconButton>
          </DocTabs>
          <Viewport>
            <ViewTop>
              <Prompt>&lt;单击右键&gt;获取数值输入选项.<br />&lt;单击右键&gt;获取选项.</Prompt>
              <ViewTools>
                {viewTools.map(([name, icon, menu]) => (
                  <ViewTool key={name} $menu={menu} aria-label={name}>
                    {icon}
                    {menu && <Caret />}
                  </ViewTool>
                ))}
                <Combo $w={114} $h={22}>
                  <svg width="33" height="16" viewBox="0 0 33 16">
                    <path d="M6 10C1 6 4 1 8.500 1S16 6 11 10V13H6Z" fill="#fff" stroke="#aaa" /><path d="M7 15h3" stroke="#999" /><circle cx="26" cy="8" r="6" fill="#ddd" stroke="#8c8c8c" />
                  </svg>
                  <ComboSelect disabled aria-label="当前图层" defaultValue="0"><option value="0">图层0000</option></ComboSelect>
                  <Caret c={grey} />
                </Combo>
              </ViewTools>
            </ViewTop>
            <Scene aria-label="模型视图">
              <g transform="translate(-361 -194)" fill="none">
                <path d="M652 333L650 341V536L654 541" stroke="#151515" strokeWidth="1.500" fill="#6a4c00" />
                <path d="M654 532H959L956 541H652Z" fill="#b98a04" stroke="#3d2f00" />
                <path d="M653 331H958L959 532H655Z" fill="#c79403" />
                <path d="M655 494H698V531" stroke="#b48400" />
                <path d="M805 331L807 531M654 431H959" stroke="#3d8fb0" strokeWidth="2" />
                <path d="M651 541V480" stroke="#3fae26" strokeWidth="1.500" />
                <path d="M648 479L651 472V480Z" fill="#1f8e1c" />
                <path d="M646 433L650 439M649 457L651 450" stroke="#b87410" strokeWidth="1.500" />
                <path d="M653 331H958L959 532H655Z" stroke="#0b08e8" strokeWidth="3" strokeLinejoin="round" />
                <text x="651" y="532" fill="#8e5a0a" fontSize="15">Z</text>
                <path d="M652 541H716" stroke="#f00" strokeWidth="1.500" />
                <path d="M713 538L721 541L713 544Z" fill="#e41313" />
                <path d="M636.500 215H972L974.500 547H639Z" stroke="#0a8cff" strokeWidth="2" />
                <g fill="#0a8cff">
                  <text x="639" y="547">U = 0.0, V = 0.0</text>
                  <text x="974" y="547">U = 1.0</text>
                  <text x="638" y="214">V</text>
                  <text x="667" y="214">1</text>
                </g>
                <path d="M423 612V576" stroke="#33d321" strokeWidth="1.600" />
                <path d="M420 577L423 571L425 577Z" fill="#0f4a10" />
                <path d="M424 613H466" stroke="#f00" strokeWidth="1.600" />
                <path d="M458 610.500L466 613L458 615.500Z" fill="#a30d0d" />
                <path d="M423 611L426 606" stroke="#00006a" strokeWidth="3" />
                <text x="417" y="571" fill="#33d321" fontSize="16">Y</text>
                <text x="467" y="622" fill="#f11">X</text>
                <text x="420" y="613" fill="#1b1be0" fontSize="15">Z</text>
                <text x="365" y="685" fill="#0c0c0c">194.62mm</text>
              </g>
            </Scene>
            <Monitor>
              <Lamp />
              <Gauge />
              <Speed>0.1<SpeedUnit><svg width="6" height="8" viewBox="0 0 6 8"><path d="M3 0L6 4H4V8H2V4H0Z" fill="#18a7f5" /></svg>K/s</SpeedUnit></Speed>
              <Speed>0.3<SpeedUnit><svg width="6" height="8" viewBox="0 0 6 8"><path d="M3 8L6 4H4V0H2V4H0Z" fill="#10c05b" /></svg>K/s</SpeedUnit></Speed>
            </Monitor>
          </Viewport>
        </Docs>
      </Work>

      <StatusBar>
        <Message>指定U素线的个数 &lt;单击中键&gt;结束.</Message>
        <Divider $h={26} $c="#8b8f94" />
        <Gap $w={11} />
        <StatusButton $on aria-label="管理器"><svg width="15" height="14" viewBox="0 0 15 14" fill="none"><rect x=".5" y=".5" width="14" height="13" fill="#fff" stroke="#35599a" /><path d="M.5 2H14.500" stroke="#35599a" strokeWidth="2" /><path d="M3 4V13" stroke="#35599a" strokeDasharray="1 1" /><path d="M6 5.500H12M9 5V8" stroke="#555" strokeWidth="2" /><path d="M9 8V12" stroke={red} strokeWidth="1.500" /></svg></StatusButton>
        <StatusButton aria-label="显示器"><svg width="15" height="13" viewBox="0 0 15 13"><rect width="15" height="9" fill="#2cabc9" stroke="#8b8d90" /><path d="M4 12h7v-2H4z" fill="#444" /></svg></StatusButton>
        <StatusButton aria-label="输出"><svg width="14" height="14" viewBox="0 0 14 14" fill="none"><rect x=".5" y=".5" width="13" height="13" fill="#fff" stroke="#6f8fc4" /><path d="M0 2H14" stroke="#5d84c6" strokeWidth="3" /><path d="M2 6H12M2 8.500H12M2 11H10" stroke="#8aa4cf" /></svg></StatusButton>
        <StatusInput aria-label="命令输入" />
        <ImeBar>
          <ImeLogo width="32" height="32" viewBox="0 0 32 32" fill="none">
            <rect x="3" y="3" width="26" height="26" rx="5" transform="rotate(-12 16 16)" fill="url(#sogou)" />
            <path d="M23 8.500C15 6.500 8.500 9 9.500 13S23 15 23 19.500S14 25 8 21.500" stroke="#fff" strokeWidth="4" />
          </ImeLogo>
          <ImeText>中</ImeText>
          <ImeCell><svg width="16" height="16" viewBox="0 0 16 16" fill="none"><circle cx="4" cy="6" r="2" stroke="#0a6ddb" strokeWidth="1.500" /><path d="M10 8H13.500V11L11 15H10L11 11H10Z" fill="#0a6ddb" /></svg></ImeCell>
          <ImeCell><svg width="14" height="17" viewBox="0 0 14 17" fill="none"><rect x="4" y="0" width="6" height="10" rx="3" fill="#0a6ddb" /><path d="M1.500 7C1.500 14 12.500 14 12.500 7M7 12V17" stroke="#0a6ddb" strokeWidth="2" /></svg></ImeCell>
          <ImeCell><svg width="16" height="13" viewBox="0 0 16 13" fill="none" stroke="#0a6ddb" strokeWidth="1.700"><rect x="1" y="1" width="14" height="11" rx="1" /><path d="M3 4H13M3 6.500H13" strokeDasharray="2 1" /><path d="M4 9.500H12" /></svg></ImeCell>
          <ImeCell><svg width="16" height="15" viewBox="0 0 16 15"><path d="M4 1L8 3L12 1L16 4L14 8L12 7V15H4V7L2 8L0 4Z" fill="#0a6ddb" /></svg></ImeCell>
          <ImeCell><svg width="16" height="14" viewBox="0 0 16 14"><path d="M7 0h2v3c4 0 6 2 6 4l1 1v3l-1 1c-3 3-11 3-14 0l-1-1V8l1-1c0-2 2-4 6-4z" fill="#0a6ddb" /><circle cx="5" cy="8" r="1.300" fill="#fff" /><circle cx="11" cy="8" r="1.300" fill="#fff" /></svg></ImeCell>
          <ImeCell><svg width="14" height="14" viewBox="0 0 14 14" fill="#0a6ddb"><rect width="6" height="6" rx="1.500" /><rect x="8" width="6" height="6" rx="3" /><rect y="8" width="6" height="6" rx="1.500" /><rect x="8" y="8" width="6" height="6" rx="1.500" /></svg></ImeCell>
          <ImeCell><svg width="16" height="16" viewBox="0 0 16 16" fill="none" stroke="#0a6ddb"><circle cx="8" cy="8" r="6.300" strokeWidth="2.500" strokeDasharray="2.500 2.440" /><circle cx="8" cy="8" r="4" strokeWidth="3" /></svg></ImeCell>
        </ImeBar>
        <Watermark>CSDN @山涧果子</Watermark>
      </StatusBar>
      <TopShadow />
    </Shell>
  );
}
